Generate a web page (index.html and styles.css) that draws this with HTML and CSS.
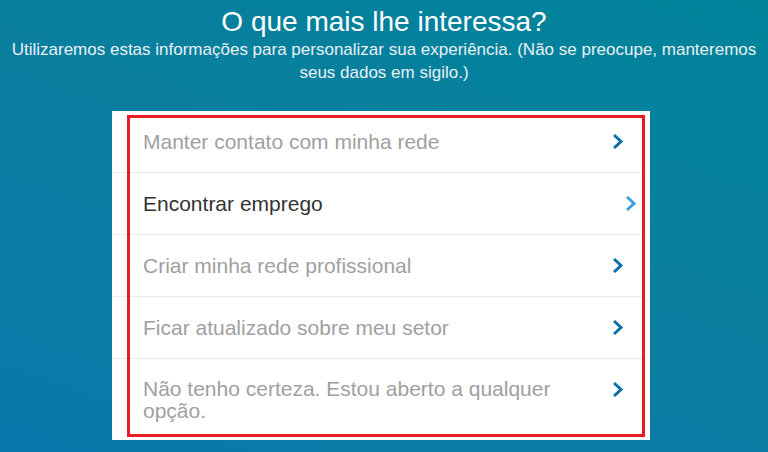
FILE: index.html
```html
<!DOCTYPE html>
<html lang="pt-BR">
<head>
<meta charset="utf-8">
<title>O que mais lhe interessa?</title>
<link rel="stylesheet" href="styles.css">
</head>
<body>
<div class="page">
  <header class="intro">
    <h1 class="title">O que mais lhe interessa?</h1>
    <p class="subtitle">Utilizaremos estas informações para personalizar sua experiência. (Não se preocupe, manteremos seus dados em sigilo.)</p>
  </header>
  <div class="card">
    <ul class="options">
      <li class="option"><span class="label">Manter contato com minha rede</span><svg class="chev" viewBox="0 0 12 17"><polyline points="2,2 9,8.5 2,15"/></svg></li>
      <li class="option option-active"><span class="label">Encontrar emprego</span><svg class="chev" viewBox="0 0 12 17"><polyline points="2,2 9,8.5 2,15"/></svg></li>
      <li class="option"><span class="label">Criar minha rede profissional</span><svg class="chev" viewBox="0 0 12 17"><polyline points="2,2 9,8.5 2,15"/></svg></li>
      <li class="option"><span class="label">Ficar atualizado sobre meu setor</span><svg class="chev" viewBox="0 0 12 17"><polyline points="2,2 9,8.5 2,15"/></svg></li>
      <li class="option option-last"><span class="label">Não tenho certeza. Estou aberto a qualquer opção.</span><svg class="chev" viewBox="0 0 12 17"><polyline points="2,2 9,8.5 2,15"/></svg></li>
    </ul>
    <div class="highlight"></div>
  </div>
</div>
</body>
</html>
```
FILE: styles.css
```css
html, body {
  margin: 0;
  padding: 0;
}
body {
  width: 768px;
  height: 452px;
  overflow: hidden;
  font-family: "Liberation Sans", Arial, sans-serif;
  background: linear-gradient(200deg, #00849a 0%, #0a7e9f 45%, #0a78ab 100%);
}
.page {
  display: flex;
  flex-direction: column;
  align-items: flex-start;
}
.intro {
  width: 100%;
  text-align: center;
  padding-top: 6px;
}
.title {
  margin: 0;
  font-weight: normal;
  font-size: 28px;
  line-height: 32px;
  color: #ffffff;
}
.subtitle {
  margin: 0;
  padding: 0 4px;
  font-size: 17px;
  line-height: 23px;
  color: #e8f1f4;
}
.card {
  position: relative;
  margin-top: 27px;
  margin-left: 112px;
  width: 538px;
  height: 329px;
  background: #ffffff;
}
.options {
  list-style: none;
  margin: 0 7px 0 1px;
  padding: 0;
}
.option {
  display: flex;
  align-items: center;
  justify-content: space-between;
  height: 61px;
  padding: 0 19px 0 30px;
  border-bottom: 1px solid #e8eaec;
  font-size: 21px;
  color: #a0a0a0;
}
.option-last {
  height: auto;
  align-items: flex-start;
  padding-top: 19px;
  padding-bottom: 19px;
  border-bottom: none;
  line-height: 22px;
}
.option-last .chev {
  margin-top: 3px;
}
.label {
  max-width: 440px;
}
.option-active {
  color: #333333;
}
.chev {
  width: 12px;
  height: 17px;
  flex: none;
  fill: none;
  stroke: #0a6eaa;
  stroke-width: 3;
  stroke-linecap: butt;
}
.option-active .chev {
  stroke: #3aa2de;
  margin-right: -13px;
}
.highlight {
  position: absolute;
  left: 15px;
  top: 4px;
  width: 512px;
  height: 316px;
  border: 3px solid #ec1c24;
  pointer-events: none;
}
```
